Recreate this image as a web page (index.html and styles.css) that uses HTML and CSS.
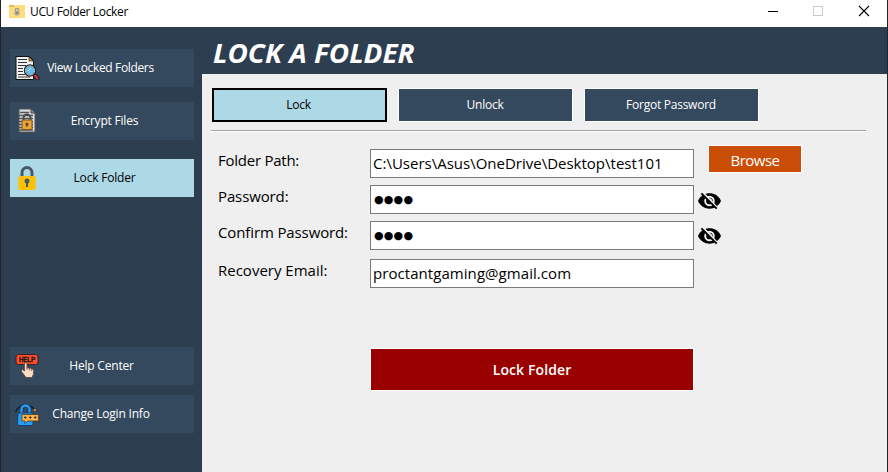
FILE: index.html
```html
<!DOCTYPE html>
<html lang="en">
<head>
<meta charset="utf-8">
<title>UCU Folder Locker</title>
<link rel="stylesheet" href="styles.css">
</head>
<body>
<div class="window">
  <div class="titlebar">
    <svg class="app-icon" width="16" height="14" viewBox="0 0 16 14"><path fill="#e9b94d" d="M0 1h5l2 2h9v3H0z"/><path fill="#ffdc7c" d="M0 3h5l2-2h9v13H0z"/><path d="M6.2 7V6.2a1.8 1.8 0 0 1 3.6 0V7" fill="none" stroke="#999" stroke-width="1.2"/><rect x="5.5" y="6.5" width="5" height="5" rx="1.8" fill="#a9a9a3"/><path d="M8 8v2" stroke="#666"/></svg>
    <span class="app-name">UCU Folder Locker</span>
    <svg class="controls" width="110" height="20" viewBox="0 0 110 20" fill="none"><path d="M0 9.500h10" stroke="#000"/><rect x="45.500" y="4.500" width="9" height="9" stroke="#ccc"/><path d="M91 4l10 10M101 4L91 14" stroke="#000" stroke-width="1.100"/></svg>
  </div>
  <div class="body">
    <nav class="sidebar">
      <button class="nav view">
        <svg class="icon" width="26" height="26" viewBox="0 0 26 26"><path d="M2 1.500h13.500l4 4V24.500H2z" fill="#f4f4f4" stroke="#111"/><path d="M15 2l4 4h-4z" fill="#f39b25" stroke="#222" stroke-width=".7"/><path d="M4 4.500h9M4 7.500h9M4 10.500h8M4 13.500h5M4 16.500h5M4 19.500h7M4 22h12" stroke="#333" stroke-width="1.200"/><path d="M20 19.500l4.500 5" stroke="#161616" stroke-width="4"/><path d="M20.500 20l3.500 4" stroke="#e4374c" stroke-width="2"/><circle cx="16" cy="15.500" r="5.200" fill="#62bce9" stroke="#222" stroke-width="2"/><circle cx="16" cy="15.500" r="4.600" fill="none" stroke="#b8cbd5"/><path d="M14 16l3-3" stroke="#d8f4ff"/></svg>
        <span>View Locked Folders</span>
      </button>
      <button class="nav encrypt">
        <svg class="icon" width="26" height="26" viewBox="0 0 26 26"><path d="M5 1h12l4 4v19H5z" fill="#d9dce0" stroke="#555"/><path d="M17 1v4h4" fill="#8a8a8a" stroke="#444"/><path d="M6 4.500h9M5 7.500h14M5 10.500h14M5 13.500h14M5 16.500h14M5 19.500h14M5 22h14" stroke="#555" stroke-width="1.300"/><path d="M9.500 13V10a3.500 3.500 0 0 1 7 0v3" fill="none" stroke="#4c4b4c" stroke-width="2"/><rect x="8" y="12" width="10" height="9.500" rx="1" fill="#efa638" stroke="#76501e"/><circle cx="13" cy="16" r="1.600" fill="#5b4428"/><path d="M13 16v3" stroke="#5b4428" stroke-width="1.300"/></svg>
        <span>Encrypt Files</span>
      </button>
      <button class="nav lock active">
        <svg class="icon" width="26" height="26" viewBox="0 0 26 26"><path d="M8 12V7.500a5 5 0 0 1 10 0V12" fill="none" stroke="#455a64" stroke-width="3"/><rect x="4.300" y="11" width="17.400" height="14" rx="2.500" fill="#ffc107"/><circle cx="13" cy="16" r="2.500" fill="#455a64"/><path d="M13 16v6" stroke="#455a64" stroke-width="2"/></svg>
        <span>Lock Folder</span>
      </button>
      <button class="nav help">
        <svg class="icon" width="26" height="26" viewBox="0 0 26 26"><rect x="2" y="1.500" width="22" height="10" rx="2.500" fill="#fd4c2c" stroke="#3a2421"/><text class="icon-text" x="13" y="9.300" text-anchor="middle" textLength="16" lengthAdjust="spacingAndGlyphs">HELP</text><path d="M10.500 18V11q0-1.500 1.300-1.500T13 11v4q1.200-.9 2.300.5 1.300-.9 2.300.6 1.800-.6 2 1.400v3.500L18 24.500h-6L7.500 18.500q-.6-2 1.200-1.800z" fill="#fddcc5" stroke="#65483e" stroke-width=".9"/><path d="M13 15v2M15.300 15.500v2M17.600 16v2" stroke="#65483e" stroke-width=".7"/></svg>
        <span>Help Center</span>
      </button>
      <button class="nav login">
        <svg class="icon" width="26" height="26" viewBox="0 0 26 26"><path d="M1.500 11A11 11 0 0 1 20 8" fill="none" stroke="#111c28" stroke-width="1.200"/><path d="M18.500 8.500l3 2.500.8-3.500z" fill="#f6a944" stroke="#242a31" stroke-width=".5"/><path d="M7.500 12V8.500a4 4 0 0 1 8 0V12" fill="none" stroke="#12355a" stroke-width="4"/><path d="M7.500 12V8.500a4 4 0 0 1 8 0V12" fill="none" stroke="#269ef8" stroke-width="2.400"/><path d="M4 12h15v11l-1 1.500H5L3.500 23z" fill="#269ef8" stroke="#11365d" stroke-width=".8"/><path d="M8 13.500h16.500v6.500H13.500L11 22.500V20H8z" fill="#ffb54c" stroke="#4b3927" stroke-width=".8"/><path d="M10 16.500h2.500M15 16.500h2.500M20 16.500h2.500M11.250 15.200v2.600M16.250 15.200v2.600M21.250 15.200v2.600" stroke="#432e24"/></svg>
        <span>Change Login Info</span>
      </button>
    </nav>
    <main class="content">
      <header><h1>LOCK A FOLDER</h1></header>
      <div class="tabs">
        <button class="tab selected"><span>Lock</span></button>
        <button class="tab"><span>Unlock</span></button>
        <button class="tab"><span class="forgot">Forgot Password</span></button>
      </div>
      <div class="rule"></div>
      <form class="form">
        <div class="row path"><label><span class="w-path">Folder Path:</span></label><div class="field"><span class="w-value">C:\Users\Asus\OneDrive\Desktop\test101</span></div><button type="button" class="browse"><span>Browse</span></button></div>
        <div class="row"><label><span class="w-pass">Password:</span></label><div class="field"><span class="dots">●●●●</span></div>
          <svg class="eye" viewBox="0 0 24 18"><path d="M0 9C2.300 3.500 7 1 12 1s9.700 2.500 12 8c-2.300 5-7 8-12 8S2.300 14 0 9z"/><circle cx="12" cy="9" r="4.500" fill="none" stroke="#efefef" stroke-width="2"/><path d="M12 6.500a2.500 2.500 0 0 1 2.500 2.500" fill="none" stroke="#efefef"/><path d="M5 0l16 17" stroke="#efefef" stroke-width="2"/><path d="M3.500 1l16 16" stroke="#000" stroke-width="2"/></svg></div>
        <div class="row confirm"><label><span class="w-confirm">Confirm Password:</span></label><div class="field"><span class="dots">●●●●</span></div>
          <svg class="eye" viewBox="0 0 24 18"><path d="M0 9C2.300 3.500 7 1 12 1s9.700 2.500 12 8c-2.300 5-7 8-12 8S2.300 14 0 9z"/><circle cx="12" cy="9" r="4.500" fill="none" stroke="#efefef" stroke-width="2"/><path d="M12 6.500a2.500 2.500 0 0 1 2.500 2.500" fill="none" stroke="#efefef"/><path d="M5 0l16 17" stroke="#efefef" stroke-width="2"/><path d="M3.500 1l16 16" stroke="#000" stroke-width="2"/></svg></div>
        <div class="row email"><label><span class="w-recovery">Recovery Email:</span></label><div class="field"><span class="w-email">proctantgaming@gmail.com</span></div></div>
        <button type="button" class="submit"><span>Lock Folder</span></button>
      </form>
    </main>
  </div>
</div>
</body>
</html>
```
FILE: styles.css
```css
* { box-sizing: border-box; }
body { margin: 0; font-family: "Open Sans", "Noto Sans", sans-serif; }
button { font: inherit; padding: 0; margin: 0; border: 0; border-radius: 0; }
span { white-space: nowrap; }
.window { width: 888px; height: 472px; border-left: 1px solid #252525; border-right: 1px solid #252525; overflow: hidden; }
.titlebar { height: 27px; background: #fff; display: flex; align-items: flex-start; padding: 4px 9px 0 8px; }
.app-name { font-size: 12px; line-height: 16px; margin-left: 5px; letter-spacing: -.35px; }
.controls { margin: -2px 0 0 auto; }
.body { display: flex; height: 445px; }
.sidebar { width: 201px; background: #2d3e50; padding: 22px 8px 39px 9px; display: flex; flex-direction: column; }
.nav { width: 184px; height: 38px; background: #34495e; color: #fff; display: flex; align-items: center; padding-left: 4px; font-size: 12px; letter-spacing: -.2px; }
.nav span { flex: 1; text-align: center; padding-right: 32px; line-height: 16px; }
.nav.view { letter-spacing: -.35px; }
.nav.view span { padding-right: 33px; }
.encrypt { margin-top: 15px; }
.lock { margin-top: 19px; }
.nav.active { background: #add8e6; color: #000; }
.help { margin-top: auto; }
.login { margin-top: 10px; }
.nav.encrypt span, .nav.lock span { padding-right: 25px; }
.nav.help span { padding-right: 31px; }
.icon { flex: none; }
.icon-text { font: 900 7px "Liberation Sans", sans-serif; fill: #211918; stroke: #211918; stroke-width: .3px; }
.content { flex: 1; background: #efefef; }
header { height: 47px; background: #2d3e50; padding-left: 11px; }
h1 { margin: 0; display: inline-block; color: #fff; font-size: 26px; line-height: 52px; font-style: italic; font-weight: 700; white-space: nowrap; transform: scaleX(1.073); transform-origin: left; }
.tabs { display: flex; gap: 11px; padding: 14px 0 0 10px; }
.tab { width: 175px; height: 34px; border: 1px solid #fff; background: #34495e; color: #fff; font-size: 12px; line-height: 16px; letter-spacing: -.25px; padding-right: 1px; }
.tab.selected { border: 2px solid #000; background: #add8e6; color: #000; padding-right: 2px; }
.rule { width: 655px; height: 2px; margin: 8px 0 0 9px; background: #a0a0a0; border-bottom: 1px solid #fff; }
.form { padding-left: 16px; }
.row { display: flex; height: 36px; }
.row.path { margin-top: 13px; height: 40px; }
.row.confirm { height: 38px; }
label { width: 152px; font-size: 15px; line-height: 22px; letter-spacing: -.12px; }
.path label { line-height: 30px; letter-spacing: -.25px; }
.email label { letter-spacing: 0; }
.field { width: 324px; height: 29px; border: 1px solid #7a7a7a; background: #fff; padding-left: 2px; font-size: 15px; line-height: 27px; color: #000; }
.path .field { margin-top: 4px; }
.w-email { letter-spacing: .06px; }
.dots { display: block; font-family: "DejaVu Sans", sans-serif; font-size: 11px; letter-spacing: .2px; line-height: 27px; padding-left: 1px; }
.eye { width: 23px; height: 18px; margin: 7px 0 0 4px; }
.confirm .eye { margin-top: 6px; }
.browse { width: 94px; height: 28px; margin-left: 14px; border: 1px solid #fff; background: #ca4e07; color: #fff; font-size: 15px; line-height: 26px; letter-spacing: -.5px; padding-top: 1px; }
.submit { display: block; width: 324px; height: 43px; margin: 53px 0 0 152px; border: 1px solid #fff; background: #990000; color: #fff; font-size: 14px; font-weight: 600; letter-spacing: .1px; }
```
